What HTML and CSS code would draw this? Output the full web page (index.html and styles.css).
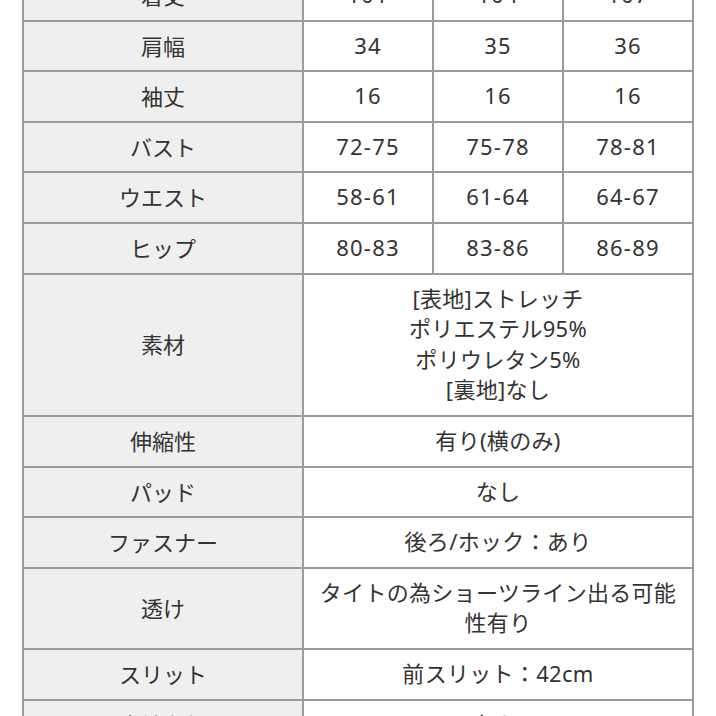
FILE: index.html
```html
<!DOCTYPE html>
<html lang="ja">
<head>
<meta charset="utf-8">
<link rel="stylesheet" href="styles.css">
</head>
<body>
<table class="spec">
  <colgroup>
    <col class="c-label"><col class="c-val"><col class="c-val"><col class="c-val">
  </colgroup>
  <tbody>
    <tr><th>着丈</th><td class="num">101</td><td class="num">104</td><td class="num">107</td></tr>
    <tr><th>肩幅</th><td class="num">34</td><td class="num">35</td><td class="num">36</td></tr>
    <tr><th>袖丈</th><td class="num">16</td><td class="num">16</td><td class="num">16</td></tr>
    <tr><th>バスト</th><td class="num">72-75</td><td class="num">75-78</td><td class="num">78-81</td></tr>
    <tr><th>ウエスト</th><td class="num">58-61</td><td class="num">61-64</td><td class="num">64-67</td></tr>
    <tr><th>ヒップ</th><td class="num">80-83</td><td class="num">83-86</td><td class="num">86-89</td></tr>
    <tr><th>素材</th><td colspan="3">[表地]ストレッチ<br>ポリエステル95%<br>ポリウレタン5%<br>[裏地]なし</td></tr>
    <tr><th>伸縮性</th><td colspan="3">有り(横のみ)</td></tr>
    <tr><th>パッド</th><td colspan="3">なし</td></tr>
    <tr><th>ファスナー</th><td colspan="3">後ろ/ホック：あり</td></tr>
    <tr><th>透け</th><td colspan="3">タイトの為ショーツライン出る可能性有り</td></tr>
    <tr><th>スリット</th><td colspan="3">前スリット：42cm</td></tr>
    <tr><th>裏地有無</th><td colspan="3">無し</td></tr>
  </tbody>
</table>
</body>
</html>
```

FILE: styles.css
```css
html, body {
  margin: 0;
  padding: 0;
  background: #ffffff;
}
body {
  overflow: hidden;
}
.spec {
  margin: -31px 0 0 22px;
  width: 670px;
  border-collapse: collapse;
  table-layout: fixed;
  font-family: "Noto Sans", "Noto Sans CJK JP", sans-serif;
  font-size: 22px;
  line-height: 30.6px;
  color: #333333;
}
.c-label { width: 280px; }
.c-val { width: 130px; }
.spec th, .spec td {
  border: 2px solid #9b9b9b;
  padding: 8px 8px 10px;
  text-align: center;
  vertical-align: middle;
}
.spec th {
  background: #efefef;
  font-weight: normal;
  font-family: "Noto Sans CJK JP", sans-serif;
}
.spec td {
  background: #ffffff;
  letter-spacing: 0.3px;
}
.spec td.num {
  letter-spacing: 1.2px;
}
```
